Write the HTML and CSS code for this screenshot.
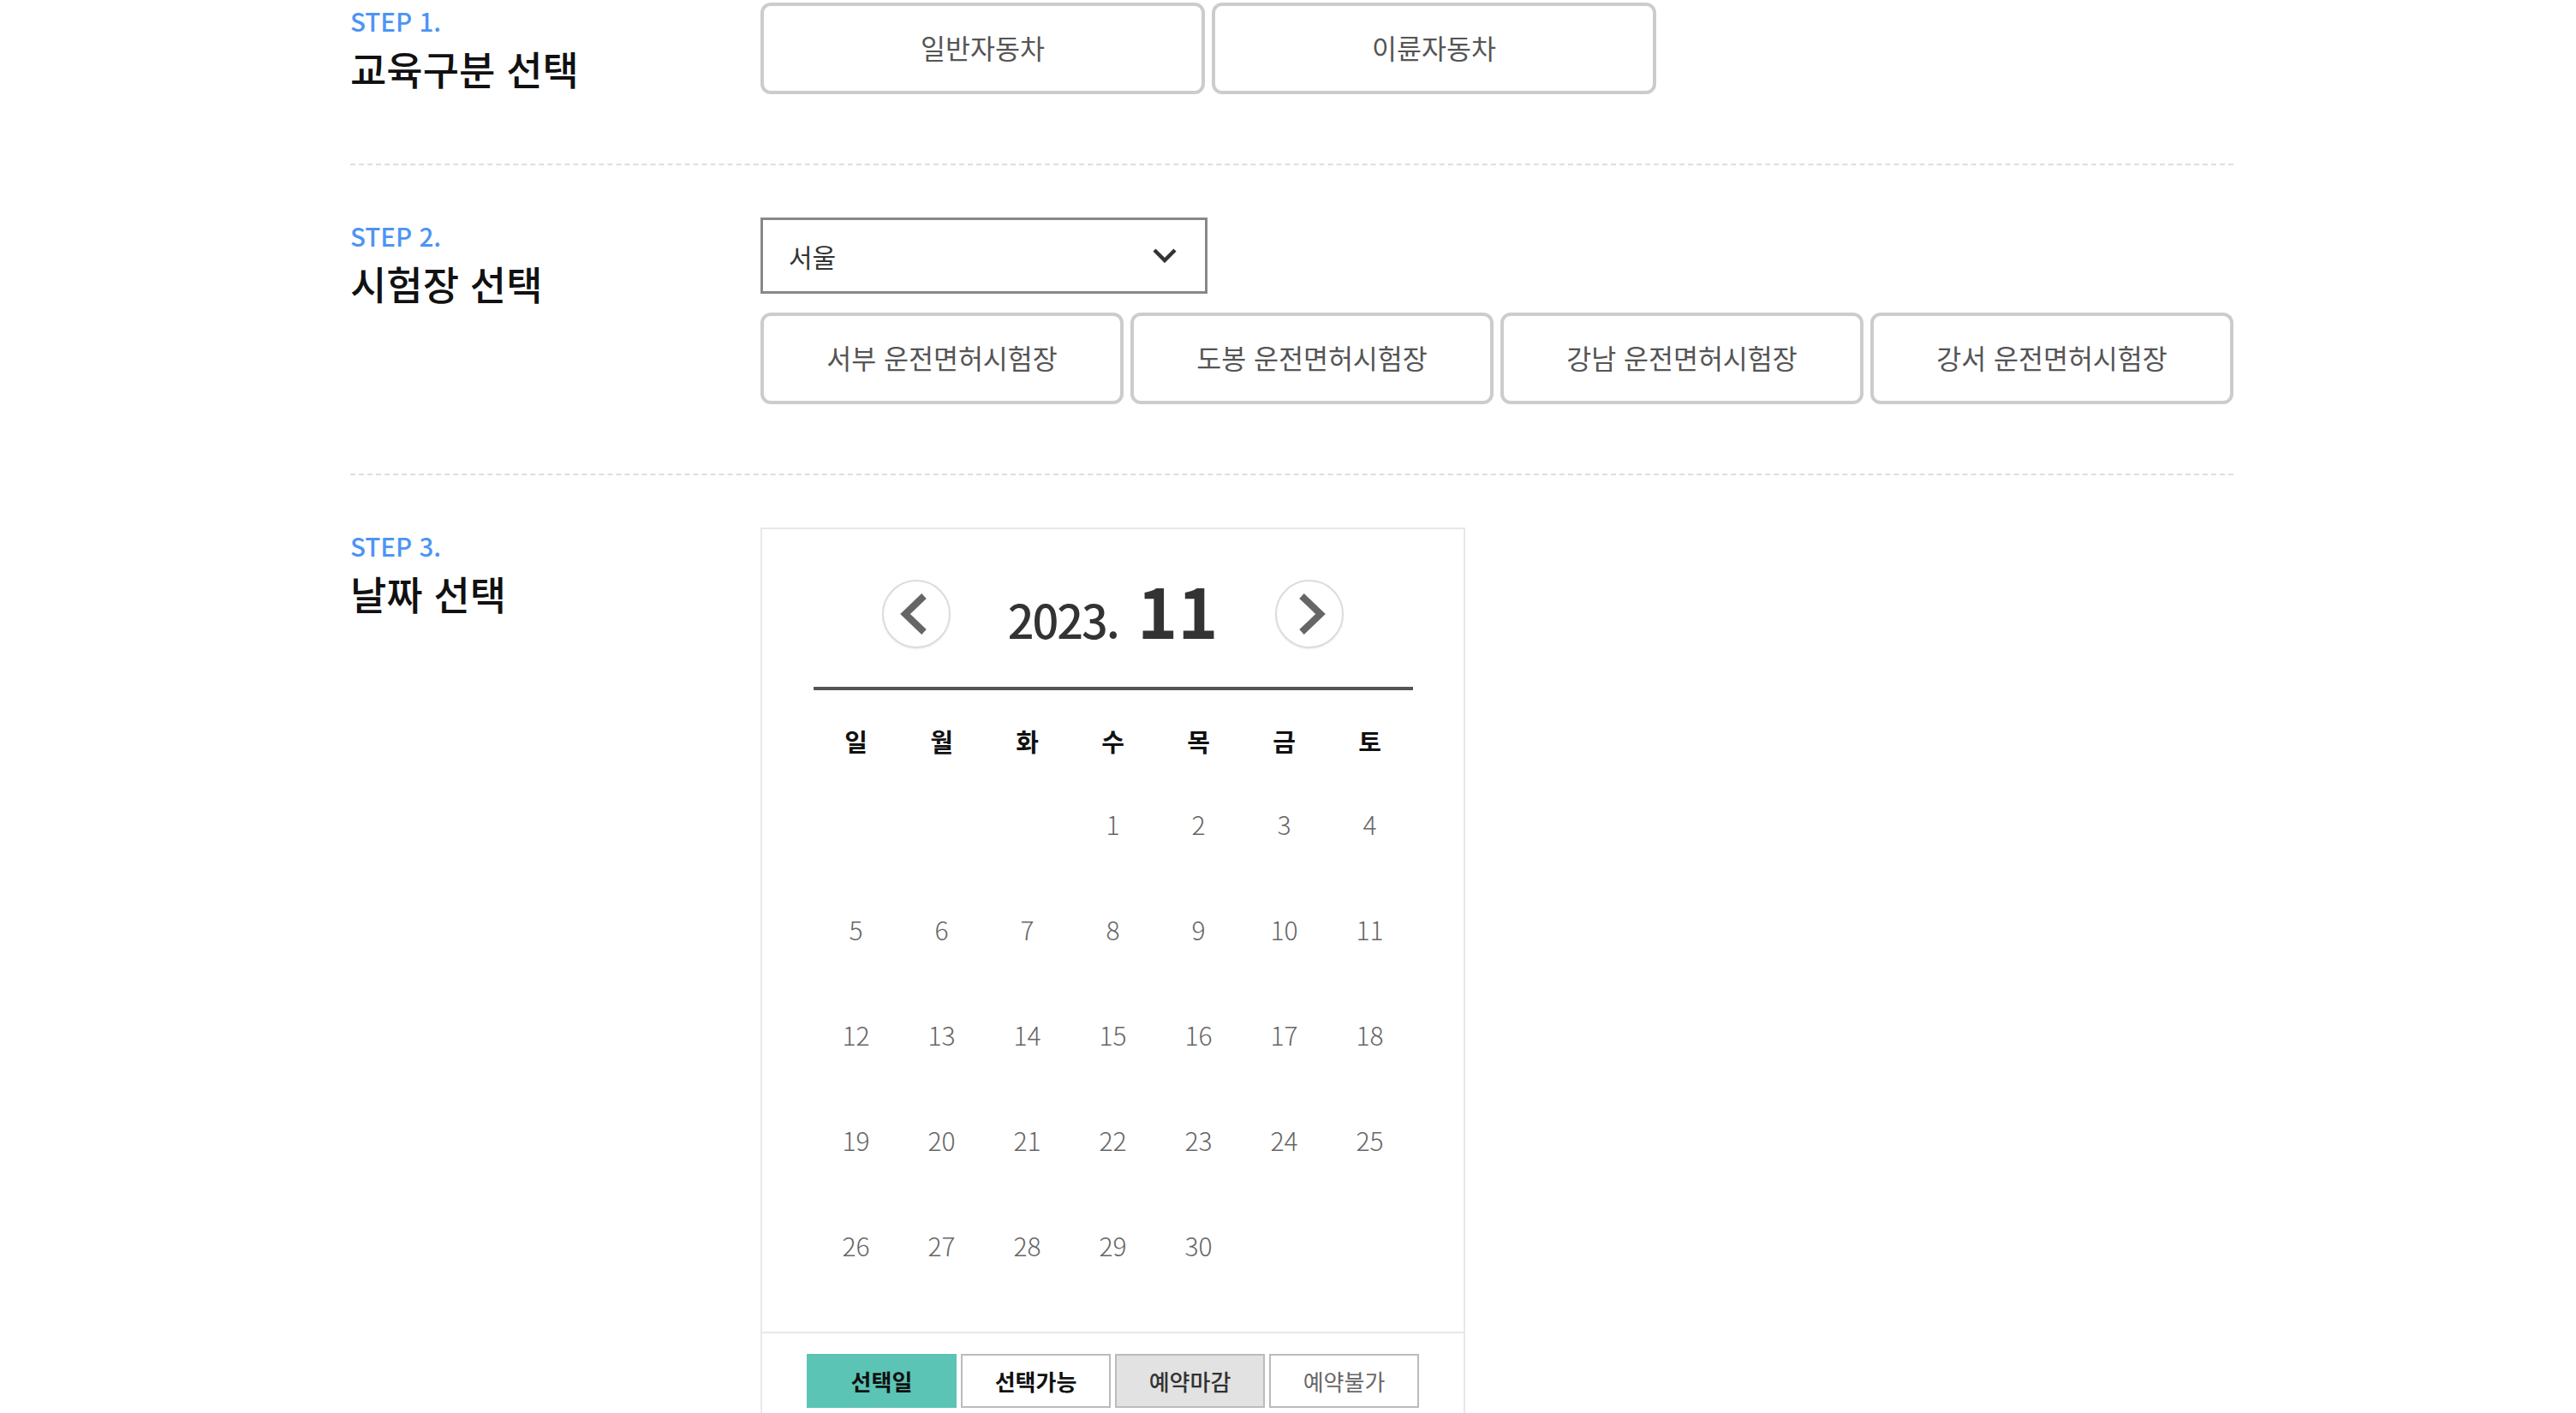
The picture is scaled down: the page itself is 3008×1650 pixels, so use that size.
FILE: index.html
```html
<!DOCTYPE html>
<html lang="ko">
<head>
<meta charset="utf-8">
<title>운전면허시험 예약</title>
<link rel="stylesheet" href="styles.css">
</head>
<body>
<main class="page">
  <section class="step step-first">
    <div class="step-head">
      <p class="step-no">STEP 1.</p>
      <h2 class="step-title">교육구분 선택</h2>
    </div>
    <div class="step-body">
      <div class="row">
        <button class="opt opt-wide">일반자동차</button>
        <button class="opt opt-wide">이륜자동차</button>
      </div>
    </div>
  </section>

  <section class="step">
    <div class="step-head">
      <p class="step-no">STEP 2.</p>
      <h2 class="step-title">시험장 선택</h2>
    </div>
    <div class="step-body">
      <div class="select">
        <span>서울</span>
        <svg class="select-arrow" width="28" height="17" viewBox="0 0 28 17"><polyline points="2,2 14,14 26,2" fill="none" stroke="#333" stroke-width="4.5"/></svg>
      </div>
      <div class="row">
        <button class="opt opt-center">서부 운전면허시험장</button>
        <button class="opt opt-center">도봉 운전면허시험장</button>
        <button class="opt opt-center">강남 운전면허시험장</button>
        <button class="opt opt-center">강서 운전면허시험장</button>
      </div>
    </div>
  </section>

  <section class="step step-last">
    <div class="step-head">
      <p class="step-no">STEP 3.</p>
      <h2 class="step-title">날짜 선택</h2>
    </div>
    <div class="step-body">
      <div class="calendar">
        <div class="cal-main">
          <div class="cal-head">
            <div class="cal-nav">
              <button class="nav-btn" aria-label="이전 달">
                <svg width="80" height="80" viewBox="0 0 80 80"><polyline points="49,19 27,40 49,61" fill="none" stroke="#666" stroke-width="8"/></svg>
              </button>
              <div class="cal-title"><span class="cal-year">2023.</span><span class="cal-month">11</span></div>
              <button class="nav-btn" aria-label="다음 달">
                <svg width="80" height="80" viewBox="0 0 80 80"><polyline points="31,19 53,40 31,61" fill="none" stroke="#666" stroke-width="8"/></svg>
              </button>
            </div>
          </div>
          <div class="week">
            <span>일</span><span>월</span><span>화</span><span>수</span><span>목</span><span>금</span><span>토</span>
          </div>
          <div class="days">
            <span></span><span></span><span></span><span>1</span><span>2</span><span>3</span><span>4</span>
            <span>5</span><span>6</span><span>7</span><span>8</span><span>9</span><span>10</span><span>11</span>
            <span>12</span><span>13</span><span>14</span><span>15</span><span>16</span><span>17</span><span>18</span>
            <span>19</span><span>20</span><span>21</span><span>22</span><span>23</span><span>24</span><span>25</span>
            <span>26</span><span>27</span><span>28</span><span>29</span><span>30</span><span></span><span></span>
          </div>
        </div>
        <div class="legend">
          <span class="lg lg-sel">선택일</span>
          <span class="lg lg-avail">선택가능</span>
          <span class="lg lg-closed">예약마감</span>
          <span class="lg lg-no">예약불가</span>
        </div>
      </div>
    </div>
  </section>
</main>
</body>
</html>
```

FILE: styles.css
```css
* { box-sizing: border-box; }
html, body { margin: 0; padding: 0; background: #fff; }
body {
  font-family: "Noto Sans CJK KR", "Noto Sans", sans-serif;
  color: #111;
  overflow: hidden;
}
button { font-family: inherit; cursor: pointer; }

.page {
  width: 2199px;
  margin-left: 409px;
  padding-top: 3px;
}

.step {
  display: flex;
  padding: 61px 0 81px;
  border-bottom: 2px dashed #dedede;
}
.step-first { padding-top: 0; }
.step-last { border-bottom: none; }

.step-head { width: 479px; flex: none; }
.step-no {
  margin: 0;
  padding-top: 1px;
  font-size: 29.5px;
  line-height: 40px;
  font-weight: 500;
  color: #4d94f4;
}
.step-title {
  margin: 5px 0 0;
  font-size: 46px;
  line-height: 60px;
  font-weight: 500;
  color: #111;
}
.step-body { flex: 1; }

.row { display: flex; gap: 8px; }
.opt {
  height: 107px;
  border: 4px solid #cccccc;
  border-radius: 12px;
  background: #fff;
  font-size: 31.5px;
  color: #555;
  padding: 0 0 3px;
}
.opt-wide { width: 519px; }
.opt-center { flex: 1; }

.select {
  width: 522px;
  height: 89px;
  border: 3px solid #888;
  display: flex;
  align-items: center;
  justify-content: space-between;
  padding: 0 33px 0 30px;
  font-size: 30px;
  color: #333;
  margin-bottom: 22px;
}

.calendar {
  width: 823px;
  border: 2px solid #e8e8e8;
}
.cal-main {
  width: 700px;
  margin: 0 auto;
  padding: 59px 0 40px;
}
.cal-head {
  padding-bottom: 45px;
  border-bottom: 4px solid #555;
}
.cal-nav {
  width: 539px;
  height: 80px;
  margin: 0 auto;
  display: flex;
  align-items: center;
  justify-content: space-between;
}
.nav-btn {
  width: 80px;
  height: 80px;
  padding: 0;
  border: 2px solid #dcdcdc;
  border-radius: 50%;
  background: #fff;
  box-shadow: 0 1px 2px rgba(0,0,0,0.08);
  display: flex;
  align-items: center;
  justify-content: center;
  overflow: hidden;
  flex: none;
}
.nav-btn svg { flex: none; }
.cal-title {
  display: flex;
  align-items: baseline;
  line-height: 1;
  margin-bottom: 12px;
  color: #333;
  white-space: nowrap;
}
.cal-year { font-size: 54px; font-weight: 500; letter-spacing: -2px; }
.cal-month { font-size: 80px; font-weight: 700; margin-left: 22px; }

.week {
  display: grid;
  grid-template-columns: repeat(7, 1fr);
  height: 71px;
  margin-top: 23px;
  align-items: center;
  justify-items: center;
  font-size: 29px;
  font-weight: 700;
  color: #111;
}
.days {
  display: grid;
  grid-template-columns: repeat(7, 1fr);
  grid-auto-rows: 123px;
  align-items: center;
  justify-items: center;
  font-size: 30px;
  font-weight: 300;
  color: #666;
}

.legend {
  border-top: 2px solid #e8e8e8;
  padding: 24px 0 30px;
  display: flex;
  justify-content: center;
  gap: 5px;
}
.lg {
  width: 175px;
  height: 63px;
  border: 2px solid #bbb;
  display: flex;
  align-items: center;
  justify-content: center;
  font-size: 26px;
  color: #666;
  background: #fff;
}
.lg-sel { background: #5bc4b4; border-color: #5bc4b4; font-weight: 700; color: #111; }
.lg-avail { font-weight: 700; color: #111; }
.lg-closed { background: #e2e2e2; font-weight: 500; color: #333; }
.lg-no { color: #666; }
```
